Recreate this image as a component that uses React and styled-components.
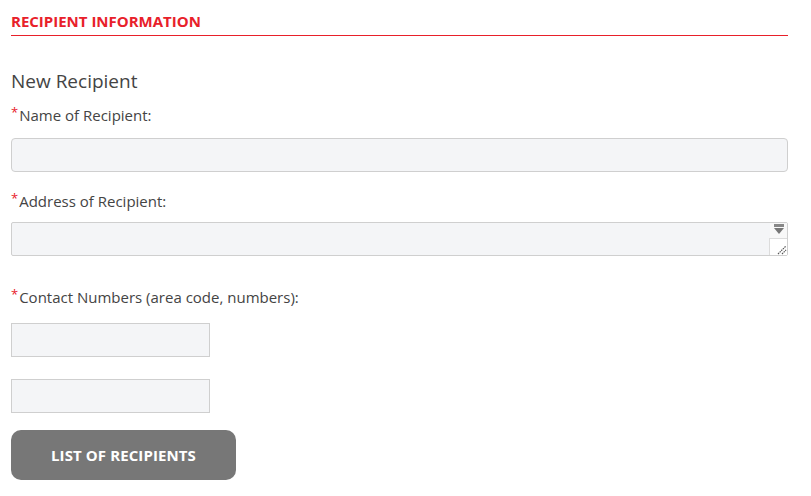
import React from "react";
import styled, { createGlobalStyle } from "styled-components";

const Global = createGlobalStyle`
  html, body { margin: 0; padding: 0; background: #fff; }
  body { font-family: "Open Sans", Lato, sans-serif; color: #444; }
  * { box-sizing: border-box; }
`;

const Page = styled.div`
  padding: 12px 23px 0 11px;
  display: flex;
  flex-direction: column;
`;

const SectionTitle = styled.h2`
  margin: 0;
  font-size: 15px;
  font-weight: 700;
  color: #e8202a;
  text-transform: uppercase;
  line-height: 19px;
  letter-spacing: 0;
  padding-bottom: 4px;
  border-bottom: 1px solid #e8202a;
`;

const SubTitle = styled.h3`
  margin: 34px 0 0;
  font-size: 19px;
  font-weight: 400;
  color: #444;
  line-height: 22px;
`;

const Field = styled.div`
  display: flex;
  flex-direction: column;
  margin-top: ${(p) => p.$mt || 0}px;
`;

const Label = styled.label`
  font-size: 15px;
  color: #444;
  line-height: 18px;
  display: flex;
  align-items: flex-start;
`;

const Star = styled.span`
  color: #e8202a;
  font-size: 13px;
  line-height: 12px;
  margin-right: 1px;
`;

const Input = styled.input`
  display: block;
  margin-top: ${(p) => p.$mt || 0}px;
  width: ${(p) => p.$w || "100%"};
  height: 34px;
  background: #f4f5f7;
  border: 1px solid #cfcfcf;
  border-radius: ${(p) => p.$r || 0}px;
  outline: none;
  font: inherit;
`;

const AreaWrap = styled.div`
  position: relative;
  margin-top: 12px;
`;

const TextArea = styled.textarea`
  display: block;
  width: 100%;
  height: 34px;
  background: #f4f5f7;
  border: 1px solid #cfcfcf;
  border-radius: 2px;
  resize: none;
  outline: none;
  font: inherit;
  padding: 2px 20px 2px 4px;
`;

const ScrollArrows = styled.div`
  position: absolute;
  top: 1px;
  right: 1px;
  width: 17px;
  height: 15px;
  background: #f8f8f8;
  display: flex;
  justify-content: center;
  align-items: flex-start;
`;

const Resizer = styled.div`
  position: absolute;
  bottom: 1px;
  right: 1px;
  width: 18px;
  height: 17px;
  background: #fff;
  border-left: 1px solid #dcdcdc;
  border-top: 1px solid #dcdcdc;
  display: flex;
  align-items: flex-end;
  justify-content: flex-end;
`;

const Button = styled.button`
  margin-top: 17px;
  width: 225px;
  height: 50px;
  border: none;
  border-radius: 10px;
  background: #777;
  color: #fff;
  font-family: "Open Sans", Lato, sans-serif;
  font-weight: 700;
  font-size: 15px;
  text-transform: uppercase;
  letter-spacing: 0.1px;
`;

export default function App() {
  return (
    <>
      <Global />
      <Page>
        <SectionTitle>Recipient Information</SectionTitle>
        <SubTitle>New Recipient</SubTitle>
        <Field $mt={14}>
          <Label><Star>*</Star>Name of Recipient:</Label>
          <Input $mt={14} $r={4} />
        </Field>
        <Field $mt={20}>
          <Label><Star>*</Star>Address of Recipient:</Label>
          <AreaWrap>
            <TextArea />
            <ScrollArrows>
              <svg width="12" height="13" viewBox="0 0 12 13">
                <rect x="1" y="1" width="10" height="3" fill="#888" />
                <polygon points="1,5 11,5 6,11" fill="#777" />
              </svg>
            </ScrollArrows>
            <Resizer>
              <svg width="12" height="12" viewBox="0 0 12 12">
                <line x1="3" y1="11" x2="11" y2="3" stroke="#555" strokeWidth="1.2" strokeDasharray="1.5 0.8" />
                <line x1="7" y1="11" x2="11" y2="7" stroke="#555" strokeWidth="1.2" strokeDasharray="1.5 0.8" />
              </svg>
            </Resizer>
          </AreaWrap>
        </Field>
        <Field $mt={32}>
          <Label><Star>*</Star>Contact Numbers (area code, numbers):</Label>
          <Input $mt={17} $w="199px" />
          <Input $mt={22} $w="199px" />
        </Field>
        <div>
          <Button>List of Recipients</Button>
        </div>
      </Page>
    </>
  );
}
